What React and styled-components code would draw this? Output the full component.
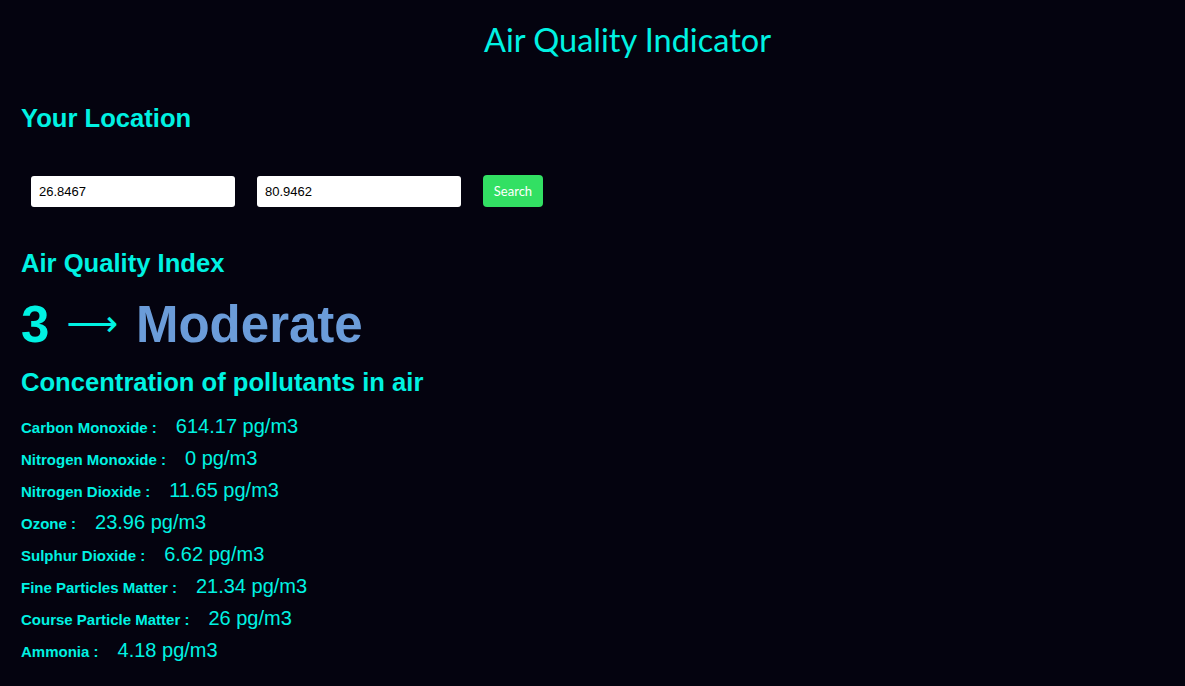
import React from 'react';
import styled, { createGlobalStyle } from 'styled-components';

const CYAN = '#00f2e2';

const GlobalStyle = createGlobalStyle`
  html, body {
    margin: 0;
    background-color: #04030f;
  }
  body {
    font-family: 'Liberation Sans', Arial, sans-serif;
  }
`;

const Page = styled.div`
  min-height: 686px;
  padding: 0 21px;
  background-color: #04030f;
  color: ${CYAN};
  overflow: hidden;
`;

const Title = styled.h1`
  font-family: 'Lato', sans-serif;
  font-weight: 400;
  font-size: 32.5px;
  text-align: center;
  margin: 0;
  padding: 20px 0 0 70px;
  line-height: 40px;
`;

const Heading = styled.h2`
  font-size: 25.6px;
  font-weight: 700;
  margin: ${(p) => p.margin || '0'};
  line-height: 1.15;
`;

const SearchBar = styled.div`
  display: flex;
  align-items: center;
  gap: 22px;
  margin: 42px 0 0 10px;
`;

const Input = styled.input`
  width: 204px;
  height: 31px;
  box-sizing: border-box;
  border: none;
  border-radius: 3px;
  padding: 0 8px;
  font-family: 'Liberation Sans', Arial, sans-serif;
  font-size: 13px;
  color: #000;
  background: #fff;
  outline: none;
`;

const SearchButton = styled.button`
  width: 60px;
  height: 32px;
  border: none;
  border-radius: 4px;
  background-color: #32e063;
  color: #fff;
  font-family: 'Lato', sans-serif;
  font-size: 13px;
  cursor: pointer;
`;

const IndexLine = styled.div`
  font-size: 51px;
  font-weight: 700;
  line-height: 1;
  height: 51px;
  margin-top: 20px;
  display: flex;
  align-items: baseline;
`;

const Arrow = styled.span`
  font-family: 'DejaVu Sans', sans-serif;
  font-size: 36px;
  font-weight: 400;
  align-self: center;
  margin: 0 18px 0 17px;
`;

const Verdict = styled.span`
  color: #6b9cd9;
`;

const List = styled.div`
  display: flex;
  flex-direction: column;
  margin-top: 18px;
`;

const Row = styled.div`
  display: flex;
  align-items: baseline;
  height: 32px;
`;

const Label = styled.span`
  font-size: 15px;
  font-weight: 700;
  margin-right: 19px;
`;

const Value = styled.span`
  font-size: 20px;
`;

const pollutants = [
  ['Carbon Monoxide', '614.17'],
  ['Nitrogen Monoxide', '0'],
  ['Nitrogen Dioxide', '11.65'],
  ['Ozone', '23.96'],
  ['Sulphur Dioxide', '6.62'],
  ['Fine Particles Matter', '21.34'],
  ['Course Particle Matter', '26'],
  ['Ammonia', '4.18'],
];

export default function App() {
  return (
    <>
      <GlobalStyle />
      <Page>
        <Title>Air Quality Indicator</Title>
        <Heading margin="44px 0 0">Your Location</Heading>
        <SearchBar>
          <Input defaultValue="26.8467" />
          <Input defaultValue="80.9462" />
          <SearchButton>Search</SearchButton>
        </SearchBar>
        <Heading margin="42px 0 0">Air Quality Index</Heading>
        <IndexLine>
          3<Arrow>⟶</Arrow>
          <Verdict>Moderate</Verdict>
        </IndexLine>
        <Heading margin="18px 0 0">Concentration of pollutants in air</Heading>
        <List>
          {pollutants.map(([name, value]) => (
            <Row key={name}>
              <Label>{name} :</Label>
              <Value>{value} pg/m3</Value>
            </Row>
          ))}
        </List>
      </Page>
    </>
  );
}
